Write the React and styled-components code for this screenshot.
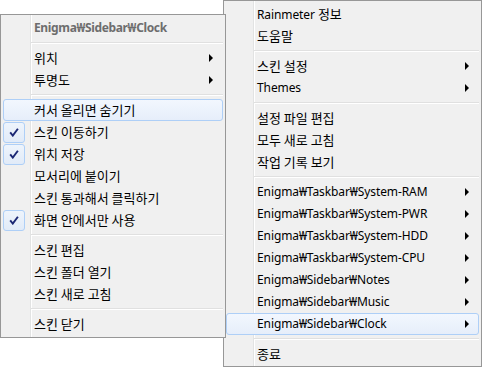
import React from "react";
import styled, { createGlobalStyle, css } from "styled-components";

const GlobalStyle = createGlobalStyle`
  html, body { margin: 0; padding: 0; background: #ffffff; }
  body {
    font-family: "Noto Sans", "Noto Sans CJK KR", sans-serif;
    font-size: 12px;
    color: #000;
  }
`;

const Stage = styled.div`
  position: relative;
  width: 482px;
  height: 368px;
  overflow: hidden;
  background: #fff;
`;

const Menu = styled.div`
  position: absolute;
  left: ${(p) => p.$left}px;
  top: ${(p) => p.$top}px;
  width: ${(p) => p.$width}px;
  height: ${(p) => p.$height}px;
  box-sizing: border-box;
  border: 1px solid #979797;
  background: #f0f0f0;
  z-index: ${(p) => p.$z};
  &::before {
    content: "";
    position: absolute;
    top: 0;
    bottom: 0;
    left: 29px;
    width: 1px;
    background: #e2e3e3;
    border-right: 1px solid #ffffff;
  }
`;

const List = styled.div`
  position: relative;
  display: flex;
  flex-direction: column;
  padding: 2px 0;
`;

const Item = styled.div`
  position: relative;
  height: 22px;
  margin: 0 2px;
  box-sizing: border-box;
  display: flex;
  align-items: center;
  border: 1px solid transparent;
  border-radius: 3px;
  color: ${(p) => (p.$muted ? "#6d6d6d" : "#000")};
  font-weight: ${(p) => (p.$muted ? 700 : 400)};
  letter-spacing: ${(p) => (p.$muted ? "-0.35px" : "-0.1px")};
  white-space: nowrap;
  ${(p) =>
    p.$active &&
    css`
      border-color: #aecff7;
      background: linear-gradient(#f2f7fe, #e6eefa);
    `}
`;

const CheckSlot = styled.div`
  width: 22px;
  height: 21px;
  margin-left: -1px;
  box-sizing: border-box;
  flex: none;
  display: flex;
  align-items: center;
  justify-content: center;
  border-radius: 3px;
  ${(p) =>
    p.$on &&
    css`
      border: 1px solid #aecff7;
      background: linear-gradient(#eef4fc, #e1ebf8);
    `}
`;

const Label = styled.span`
  margin-left: 9px;
  flex: 1;
  line-height: 20px;
`;

const Ko = styled.span`
  font-family: "Noto Sans CJK KR", sans-serif;
  font-size: 13px;
  letter-spacing: 0;
`;

const Arrow = styled.span`
  width: 0;
  height: 0;
  margin-right: 9px;
  border-top: 4px solid transparent;
  border-bottom: 4px solid transparent;
  border-left: 4px solid #000;
`;

const Separator = styled.div`
  height: 8px;
  display: flex;
  align-items: center;
  &::after {
    content: "";
    flex: 1;
    margin-left: 30px;
    margin-right: 2px;
    height: 0;
    border-top: 1px solid #e0e0e0;
    border-bottom: 1px solid #ffffff;
  }
`;

const Check = () => (
  <svg width="10" height="9" viewBox="0 0 10 9">
    <path d="M1.2 4.4 L3.8 7.6 L8.9 0.8" fill="none" stroke="#1b2774" strokeWidth="1.9" />
  </svg>
);

const splitText = (text) =>
  text.split(/([\uAC00-\uD7A3]+(?:\s+[\uAC00-\uD7A3]+)*)/).map((part, i) =>
    /[\uAC00-\uD7A3]/.test(part) ? <Ko key={i}>{part}</Ko> : part
  );

const leftMenu = [
  { label: "Enigma₩Sidebar₩Clock", muted: true },
  "sep",
  { label: "위치", sub: true },
  { label: "투명도", sub: true },
  "sep",
  { label: "커서 올리면 숨기기", active: true },
  { label: "스킨 이동하기", checked: true },
  { label: "위치 저장", checked: true },
  { label: "모서리에 붙이기" },
  { label: "스킨 통과해서 클릭하기" },
  { label: "화면 안에서만 사용", checked: true },
  "sep",
  { label: "스킨 편집" },
  { label: "스킨 폴더 열기" },
  { label: "스킨 새로 고침" },
  "sep",
  { label: "스킨 닫기" },
];

const rightMenu = [
  { label: "Rainmeter 정보" },
  { label: "도움말" },
  "sep",
  { label: "스킨 설정", sub: true },
  { label: "Themes", sub: true },
  "sep",
  { label: "설정 파일 편집" },
  { label: "모두 새로 고침" },
  { label: "작업 기록 보기" },
  "sep",
  { label: "Enigma₩Taskbar₩System-RAM", sub: true },
  { label: "Enigma₩Taskbar₩System-PWR", sub: true },
  { label: "Enigma₩Taskbar₩System-HDD", sub: true },
  { label: "Enigma₩Taskbar₩System-CPU", sub: true },
  { label: "Enigma₩Sidebar₩Notes", sub: true },
  { label: "Enigma₩Sidebar₩Music", sub: true },
  { label: "Enigma₩Sidebar₩Clock", sub: true, active: true },
  "sep",
  { label: "종료" },
];

const renderItems = (items) =>
  items.map((it, i) =>
    it === "sep" ? (
      <Separator key={i} />
    ) : (
      <Item key={i} $active={it.active} $muted={it.muted}>
        <CheckSlot $on={it.checked}>{it.checked && <Check />}</CheckSlot>
        <Label>{splitText(it.label)}</Label>
        {it.sub && <Arrow />}
      </Item>
    )
  );

export default function App() {
  return (
    <Stage>
      <GlobalStyle />
      <Menu $left={223} $top={0} $width={259} $height={367} $z={1}>
        <List>{renderItems(rightMenu)}</List>
      </Menu>
      <Menu $left={0} $top={14} $width={226} $height={324} $z={2}>
        <List>{renderItems(leftMenu)}</List>
      </Menu>
    </Stage>
  );
}
